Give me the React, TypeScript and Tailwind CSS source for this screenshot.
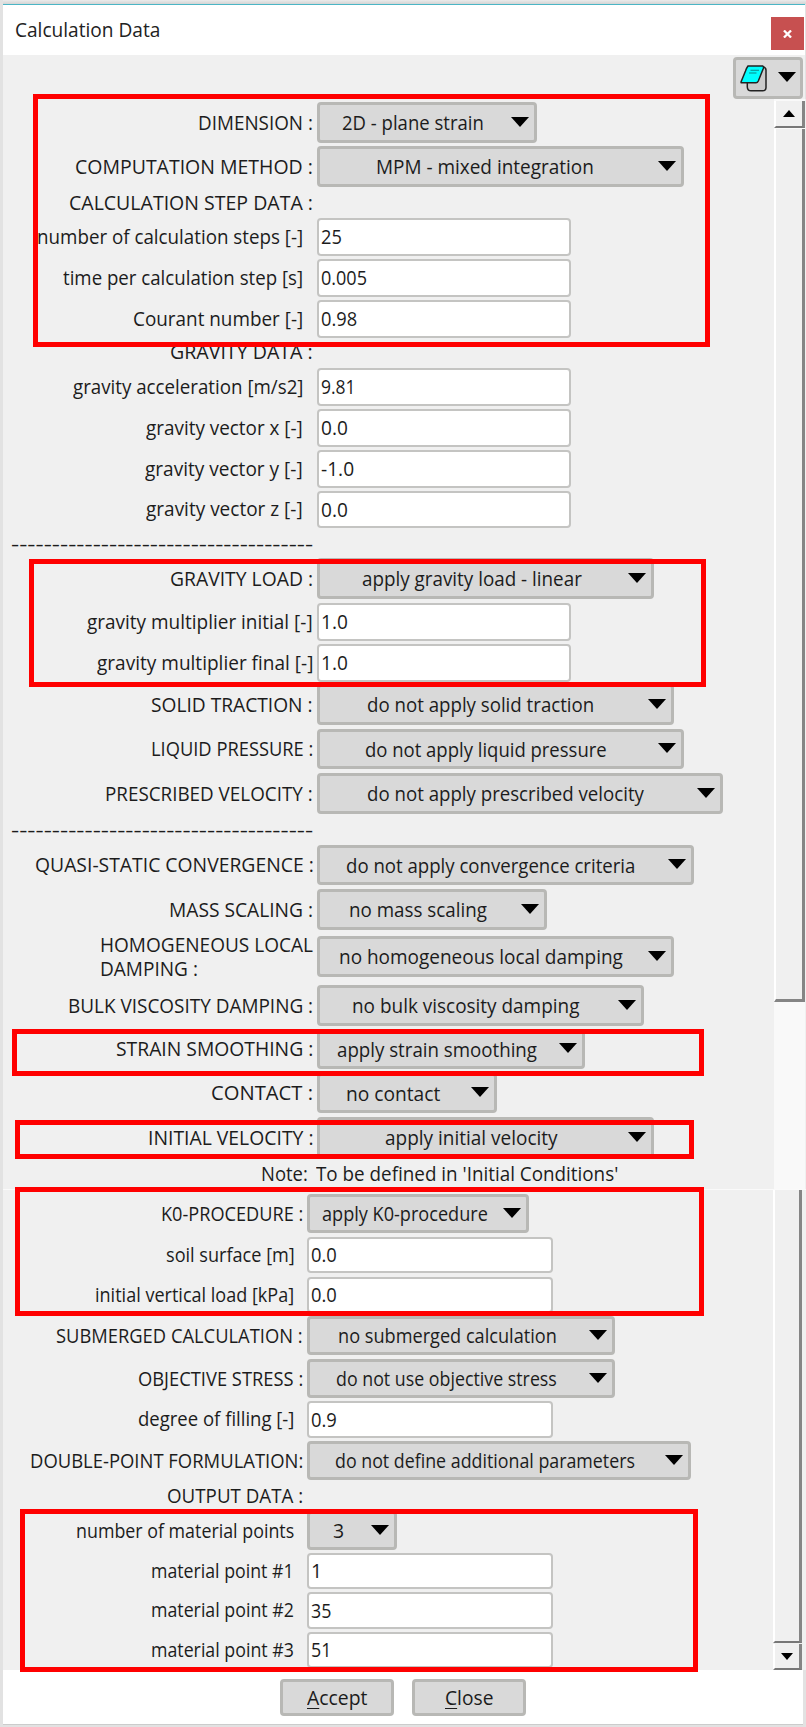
import { useLayoutEffect, useRef, useState } from "react";
import type { ReactNode } from "react";

type Kind = "select" | "input" | "heading" | "note";

interface Row {
  kind: Kind;
  box: string; // vertical rhythm of the row
  label: string;
  lw: number; // label width
  pad?: string; // space between the label and the field
  value?: string;
  vw?: number; // value width
  width?: string; // field width
  indent?: string; // value indent
}

/** Sets a line of text to an exact width by condensing its glyphs. */
function Fit({ w, children }: { w: number; children: ReactNode }) {
  const ref = useRef<HTMLSpanElement>(null);
  const [scale, setScale] = useState(1);
  useLayoutEffect(() => {
    if (ref.current) setScale((w + 2) / ref.current.offsetWidth);
  }, [w]);
  return (
    <span className="block shrink-0" style={{ width: w }}>
      <span
        ref={ref}
        className="-ml-px inline-block origin-left whitespace-pre"
        style={{ transform: `scaleX(${scale})` }}
      >
        {children}
      </span>
    </span>
  );
}

function Arrow() {
  return (
    <svg className="mb-[2px] h-[10px] w-[18px] shrink-0" viewBox="0 0 18 10">
      <path d="M0 0H18L9 10Z" fill="#000" />
    </svg>
  );
}

const dashes = "-".repeat(37);

const upper: Row[] = [
  { kind: "select", box: "mt-[3px] h-[41px]", label: "DIMENSION :", lw: 113, value: "2D - plane strain", vw: 139.7, width: "w-[220px]", indent: "pl-[23px]" },
  { kind: "select", box: "mt-[3px] h-[41px]", label: "COMPUTATION METHOD :", lw: 235.7, value: "MPM - mixed integration", vw: 216, width: "w-[367px]", indent: "pl-[57px]" },
  { kind: "heading", box: "mt-[3px] h-[26px]", label: "CALCULATION STEP DATA :", lw: 242 },
  { kind: "input", box: "mt-[2px] h-[38px]", label: "number of calculation steps [-]", lw: 264.5, pad: "pr-[15px]", value: "25", vw: 19 },
  { kind: "input", box: "mt-[3px] h-[38px]", label: "time per calculation step [s]", lw: 237.7, pad: "pr-[15px]", value: "0.005", vw: 44 },
  { kind: "input", box: "mt-[3px] h-[38px]", label: "Courant number [-]", lw: 168, pad: "pr-[15px]", value: "0.98", vw: 34.5 },
  { kind: "heading", box: "mt-[2px] h-[25px]", label: "GRAVITY DATA :", lw: 141 },
  { kind: "input", box: "mt-[3px] h-[38px]", label: "gravity acceleration [m/s2]", lw: 228.3, pad: "pr-[15px]", value: "9.81", vw: 33 },
  { kind: "input", box: "mt-[3px] h-[38px]", label: "gravity vector x [-]", lw: 154.7, pad: "pr-[15px]", value: "0.0", vw: 24.7 },
  { kind: "input", box: "mt-[3px] h-[38px]", label: "gravity vector y [-]", lw: 156, pad: "pr-[15px]", value: "-1.0", vw: 31.5 },
  { kind: "input", box: "mt-[3px] h-[37px]", label: "gravity vector z [-]", lw: 154.7, pad: "pr-[15px]", value: "0.0", vw: 24.7 },
  { kind: "heading", box: "mt-[4px] h-[24px]", label: dashes, lw: 300 },
  { kind: "select", box: "mt-[2px] h-[41px]", label: "GRAVITY LOAD :", lw: 141, value: "apply gravity load - linear", vw: 218.3, width: "w-[337px]", indent: "pl-[43px]" },
  { kind: "input", box: "mt-[4px] h-[38px]", label: "gravity multiplier initial [-]", lw: 223.7, value: "1.0", vw: 24.7 },
  { kind: "input", box: "mt-[3px] h-[38px]", label: "gravity multiplier final [-]", lw: 214, value: "1.0", vw: 24.7 },
  { kind: "select", box: "mt-[2px] h-[41px]", label: "SOLID TRACTION :", lw: 160, value: "do not apply solid traction", vw: 225.7, width: "w-[357px]", indent: "pl-[48px]" },
  { kind: "select", box: "mt-[4px] h-[40px]", label: "LIQUID PRESSURE :", lw: 160, value: "do not apply liquid pressure", vw: 239.3, width: "w-[367px]", indent: "pl-[46px]" },
  { kind: "select", box: "mt-[4px] h-[41px]", label: "PRESCRIBED VELOCITY :", lw: 206, value: "do not apply prescribed velocity", vw: 275, width: "w-[406px]", indent: "pl-[48px]" },
  { kind: "heading", box: "mt-[4px] h-[24px]", label: dashes, lw: 300 },
  { kind: "select", box: "mt-[3px] h-[40px]", label: "QUASI-STATIC CONVERGENCE :", lw: 276.5, value: "do not apply convergence criteria", vw: 287.3, width: "w-[377px]", indent: "pl-[27px]" },
  { kind: "select", box: "mt-[4px] h-[41px]", label: "MASS SCALING :", lw: 142, value: "no mass scaling", vw: 136, width: "w-[230px]", indent: "pl-[30px]" },
  { kind: "select", box: "mt-[6px] h-[41px]", label: "HOMOGENEOUS LOCAL\nDAMPING :", lw: 211.3, value: "no homogeneous local damping", vw: 281.7, width: "w-[357px]", indent: "pl-[20px]" },
  { kind: "select", box: "mt-[8px] h-[41px]", label: "BULK VISCOSITY DAMPING :", lw: 243.3, value: "no bulk viscosity damping", vw: 225.3, width: "w-[327px]", indent: "pl-[33px]" },
  { kind: "select", box: "mt-[3px] h-[40px]", label: "STRAIN SMOOTHING :", lw: 195, value: "apply strain smoothing", vw: 198, width: "w-[268px]", indent: "pl-[18px]" },
  { kind: "select", box: "mt-[4px] h-[40px]", label: "CONTACT :", lw: 100, value: "no contact", vw: 92, width: "w-[180px]", indent: "pl-[27px]" },
  { kind: "select", box: "mt-[4px] h-[41px]", label: "INITIAL VELOCITY :", lw: 163.5, value: "apply initial velocity", vw: 170.7, width: "w-[337px]", indent: "pl-[66px]" },
  { kind: "note", box: "mt-[4px] h-[24px]", label: "Note:", lw: 45, pad: "pr-[10px]", value: "To be defined in 'Initial Conditions'", vw: 300.3 },
];

const lower: Row[] = [
  { kind: "select", box: "mt-[4px] h-[39px]", label: "K0-PROCEDURE :", lw: 140.5, value: "apply K0-procedure", vw: 163.7, width: "w-[222px]", indent: "pl-[13px]" },
  { kind: "input", box: "mt-[4px] h-[36px]", label: "soil surface [m]", lw: 126.5, pad: "pr-[14px]", value: "0.0", vw: 23.7 },
  { kind: "input", box: "mt-[4px] h-[36px]", label: "initial vertical load [kPa]", lw: 197.3, pad: "pr-[14px]", value: "0.0", vw: 23.7 },
  { kind: "select", box: "mt-[3px] h-[39px]", label: "SUBMERGED CALCULATION :", lw: 244.7, value: "no submerged calculation", vw: 216.7, width: "w-[308px]", indent: "pl-[29px]" },
  { kind: "select", box: "mt-[4px] h-[39px]", label: "OBJECTIVE STRESS :", lw: 163, value: "do not use objective stress", vw: 218.7, width: "w-[308px]", indent: "pl-[27px]" },
  { kind: "input", box: "mt-[3px] h-[37px]", label: "degree of filling [-]", lw: 154.5, pad: "pr-[14px]", value: "0.9", vw: 23.7 },
  { kind: "select", box: "mt-[3px] h-[39px]", label: "DOUBLE-POINT FORMULATION:", lw: 271, value: "do not define additional parameters", vw: 298, width: "w-[384px]", indent: "pl-[26px]" },
  { kind: "heading", box: "mt-[4px] h-[24px]", label: "OUTPUT DATA :", lw: 134 },
  { kind: "select", box: "mt-[3px] h-[39px]", label: "number of material points", lw: 216.5, pad: "pr-[14px]", value: "3", vw: 8.7, width: "w-[90px]", indent: "pl-[24px]" },
  { kind: "input", box: "mt-[3px] h-[36px]", label: "material point #1", lw: 140.7, pad: "pr-[14px]", value: "1", vw: 8.7 },
  { kind: "input", box: "mt-[3px] h-[37px]", label: "material point #2", lw: 141, pad: "pr-[14px]", value: "35", vw: 18.5 },
  { kind: "input", box: "mt-[3px] h-[36px]", label: "material point #3", lw: 141, pad: "pr-[14px]", value: "51", vw: 18.5 },
];

const labelDrop: Record<Kind, string> = {
  select: "pt-[1px]",
  input: "pt-0",
  heading: "pt-0",
  note: "pt-0",
};

function Line({ row, labelCol, inputW }: { row: Row; labelCol: string; inputW: string }) {
  const pad = row.pad ?? "pr-[5px]";
  return (
    <div className={`flex shrink-0 items-stretch ${row.box}`}>
      <div className={`flex shrink-0 items-center justify-end leading-[24.5px] ${labelDrop[row.kind]} ${labelCol} ${pad}`}>
        <Fit w={row.lw}>{row.label}</Fit>
      </div>
      {row.kind === "select" && (
        <div
          className={`flex items-center justify-between rounded-[4px] border-[3px] border-[#b8b8b5] bg-[#d9d9d9] pr-[5px] ${row.width} ${row.indent}`}
        >
          <div className="pt-px">
            <Fit w={row.vw ?? 0}>{row.value}</Fit>
          </div>
          <Arrow />
        </div>
      )}
      {row.kind === "input" && (
        <div className={`flex items-center rounded-[4px] border-2 border-[#c4c4c2] bg-white pl-[2.5px] ${inputW}`}>
          <Fit w={row.vw ?? 0}>{row.value}</Fit>
        </div>
      )}
      {row.kind === "note" && (
        <div className="flex items-center">
          <Fit w={row.vw ?? 0}>{row.value}</Fit>
        </div>
      )}
    </div>
  );
}

function FooterButton({ hot, rest, w }: { hot: string; rest: string; w: number }) {
  return (
    <button className="flex h-[37px] w-[114px] items-center justify-center rounded-[4px] border-[3px] border-[#b8b8b5] bg-[#d9d9d9] pt-px">
      <Fit w={w}>
        <span className="underline decoration-1 underline-offset-[3px]">{hot}</span>
        {rest}
      </Fit>
    </button>
  );
}

const marks = [
  "left-[33px] top-[94px] h-[253px] w-[677px]",
  "left-[29px] top-[559px] h-[128px] w-[677px]",
  "left-[12px] top-[1029px] h-[47px] w-[692px]",
  "left-[15px] top-[1120px] h-[39px] w-[679px]",
  "left-[15px] top-[1187px] h-[129px] w-[689px]",
  "left-[20px] top-[1509px] h-[163px] w-[678px]",
];

export default function App() {
  return (
    <div className="relative flex h-[1727px] w-[806px] flex-col overflow-hidden bg-[#e2e2e2] pl-[3px] font-['Open_Sans','Noto_Sans',sans-serif] text-[20px] leading-[24px] text-[#1c1c1c]">
      <div className="h-[4px] shrink-0 bg-linear-to-b from-[#ebebeb] to-[#d4d4d4]" />
      <header className="flex h-[51px] w-[802px] shrink-0 items-start justify-between border-t border-[#4bb5c5] bg-white pl-[13px] pr-[1px]">
        <div className="pt-[13px] text-[#222]">
          <Fit w={143}>Calculation Data</Fit>
        </div>
        <button className="mt-[12px] flex h-[33px] w-[33px] items-center justify-center bg-[#c75050]">
          <svg className="h-[8px] w-[9px]" viewBox="0 0 10 9">
            <path d="M1 .6 9 8.4M9 .6 1 8.4" stroke="#fff" strokeWidth="2.6" />
          </svg>
        </button>
      </header>

      <div className="flex h-[44px] w-[802px] shrink-0 justify-end bg-[#f0f0f0] pr-[2px] pt-[2px]">
        <button className="flex h-[42px] w-[70px] items-center justify-between rounded-[4px] border-[3px] border-[#b8b8b5] bg-[#d9d9d9] pl-[4px] pr-[4px]">
          <svg className="h-[27px] w-[28px]" viewBox="0 0 28 27">
            <path d="M22.500 1.500Q26 2.500 26 5V22.500Q26 25.800 22.500 25.800H11Q7.500 25.800 7.300 22V17" fill="#cbcbcb" stroke="#222" strokeWidth="1.5" />
            <path d="M8 1H22.500Q24 1.200 23.300 3.500L18.300 16Q17.500 17.800 16 17.800H1.500Q.8 17.800 1.200 16.500L5.500 6Q6.500 3 8 1Z" fill="#0ff" stroke="#222" strokeWidth="1.5" />
            <path d="M10.500 5.200H19M9 8H16.500" stroke="#078a8a" strokeWidth="1.1" />
          </svg>
          <Arrow />
        </button>
      </div>

      <main className="flex shrink-0 flex-col">
        <section className="flex h-[1090px] shrink-0 bg-[#f0f0f0]">
          <div className="flex w-[771px] shrink-0 flex-col">
            {upper.map((row, i) => (
              <Line key={i} row={row} labelCol="w-[314px]" inputW="w-[254px]" />
            ))}
          </div>
          <div className="flex w-[31px] shrink-0 flex-col bg-[#f9f9f9] pt-[2px]">
            <div className="flex h-[27px] items-center justify-center border-b-2 border-l-2 border-r-[3px] border-b-[#777] border-l-white border-r-[#858585] bg-[#f0f0f0]">
              <svg className="h-[7px] w-[12px]" viewBox="0 0 12 7">
                <path d="M6 0 12 7H0Z" fill="#000" />
              </svg>
            </div>
            <div className="mt-px h-[873px] border-b-[3px] border-l-2 border-r-[3px] border-b-[#858585] border-l-white border-r-[#858585] bg-[#f0f0f0]" />
          </div>
        </section>
        <section className="flex h-[481px] shrink-0 border-t border-[#fafafa] bg-[#f0f0f0]">
          <div className="flex w-[770px] shrink-0 flex-col">
            {lower.map((row, i) => (
              <Line key={i} row={row} labelCol="w-[304px]" inputW="w-[246px]" />
            ))}
          </div>
          <div className="flex w-[29px] shrink-0 flex-col">
            <div className="h-[453px] border-b-2 border-l-2 border-r-[3px] border-b-[#777] border-l-white border-r-[#858585]" />
            <div className="mt-px flex h-[26px] items-center justify-center border-b-2 border-l-2 border-r-[3px] border-b-[#777] border-l-white border-r-[#858585]">
              <svg className="h-[7px] w-[12px]" viewBox="0 0 12 7">
                <path d="M0 0H12L6 7Z" fill="#000" />
              </svg>
            </div>
          </div>
        </section>
      </main>

      <footer className="flex h-[55px] w-[800px] shrink-0 gap-[18px] border-b border-[#ccc] bg-white pl-[277px] pt-[9px]">
        <FooterButton hot="A" rest="ccept" w={58} />
        <FooterButton hot="C" rest="lose" w={46} />
      </footer>

      {marks.map((m) => (
        <div key={m} className={`pointer-events-none absolute border-[5px] border-[#f00] ${m}`} />
      ))}
    </div>
  );
}
